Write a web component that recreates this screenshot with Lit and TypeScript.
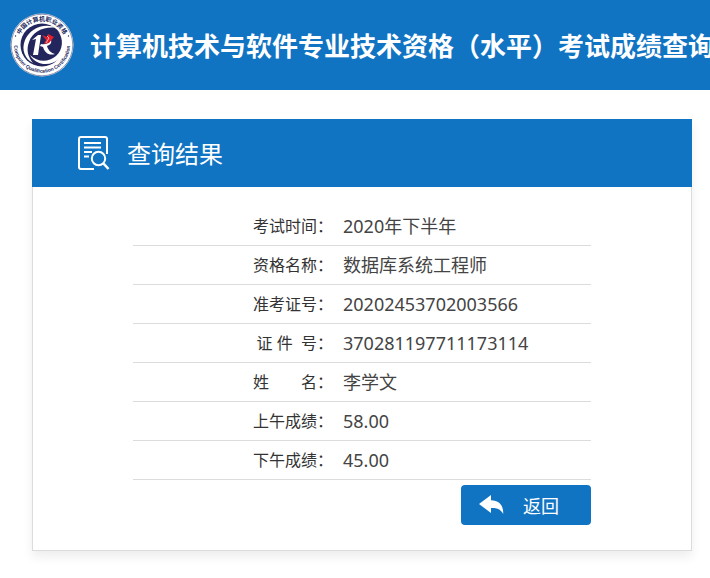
import { LitElement, html, css } from "lit";
import { customElement, property } from "lit/decorators.js";

@customElement("site-logo")
class SiteLogo extends LitElement {
  static styles = css`
    :host { display: block; flex: none; width: 64px; height: 64px; }
    svg { display: block; width: 100%; height: 100%; }
    .ring { font-family: "Liberation Sans", "Noto Sans CJK SC", sans-serif; font-weight: 700; fill: #23265c; }
    .zh { font-size: 6px; }
    .en { font-size: 5px; }
  `;
  render() {
    return html`
      <svg viewBox="0 0 64 64" role="img" aria-label="中国计算机职业资格">
        <defs>
          <path id="top" d="M8 32a24 24 0 0 1 48 0" />
          <path id="bottom" d="M4.400 27A28 28 0 1 0 59.600 27" />
        </defs>
        <circle cx="32" cy="32" r="31.500" fill="#fff" />
        <circle cx="32" cy="32" r="30.800" fill="none" stroke="#23265c" stroke-width=".5" />
        <circle cx="32" cy="32" r="21.500" fill="#23265c" />
        <path fill="#fff" d="M48 15C34 9 20 15 15 27c-4 10 0 19 8 23-5-6-7-13-4-21C23 18 34 13 48 15Z" />
        <path fill="#fff" d="M20 42c7 7 18 8 26 1 7-6 8-17 2-25 9 8 9 20 2 27-9 9-24 8-30-3Z" />
        <path fill="#fff" d="m22 27 6-5h3l-3 20h-5l3-16-4 1Z" />
        <path fill="#fff" d="M31 31c4 1 8-1 10-4 1 3-1 5-4 6 1 4 4 7 8 8-6 2-10-1-12-7l-3-1Z" />
        <path fill="#e3212d" d="m32 22 5 2 1-3 6 3-5 6-5 1 2-4-4-5Z" />
        <path fill="none" stroke="#fff" stroke-width=".6" d="m37 23 2 2-3 5" />
        <text class="ring zh" text-anchor="middle"><textPath href="#top" startOffset="50%">中国计算机职业资格</textPath></text>
        <text class="ring en" text-anchor="middle"><textPath href="#bottom" startOffset="50%">Computer Qualification Certification</textPath></text>
        <circle cx="5.500" cy="23" r=".7" fill="#23265c" />
        <circle cx="58.500" cy="23" r=".7" fill="#23265c" />
      </svg>
    `;
  }
}

interface Field { label: string; value: string; }

@customElement("app-root")
class AppRoot extends LitElement {
  static styles = css`
    :host {
      display: block;
      font-family: "Noto Sans", "Noto Sans CJK SC", sans-serif;
      color: #444;
      background: #fff;
    }
    .banner {
      display: flex;
      align-items: center;
      gap: 16px;
      height: 90px;
      box-sizing: border-box;
      padding-left: 10px;
      overflow: hidden;
      background: #1174c3;
      color: #fff;
    }
    h1 {
      margin: 0;
      font: 700 26px/40px "Noto Sans CJK SC", sans-serif;
      white-space: nowrap;
    }
    .card {
      margin: 29px 18px 27px 32px;
      box-shadow: 0 6px 10px rgba(0, 0, 0, 0.07);
    }
    .head {
      display: flex;
      align-items: center;
      gap: 17px;
      height: 68px;
      padding-left: 45px;
      background: #1174c3;
      color: #fff;
    }
    h2 { margin: 0; font: 400 24px/36px "Noto Sans CJK SC", sans-serif; }
    .body {
      padding: 20px 100px 25px;
      border: 1px solid #dcdcdc;
      border-top: 0;
      background: #fff;
    }
    table { width: 100%; border-collapse: collapse; table-layout: fixed; }
    th, td { height: 38px; padding: 0; border-bottom: 1px solid #dcdcdc; line-height: 24px; font-weight: 400; }
    th { width: 200px; text-align: right; font-size: 16px; color: #333; white-space: nowrap; }
    td { padding-left: 10px; font-size: 18px; }
    .actions { display: flex; justify-content: flex-end; padding-top: 5px; }
    button {
      display: flex;
      align-items: center;
      gap: 19px;
      width: 130px;
      height: 40px;
      padding: 0 0 0 18px;
      border: 0;
      border-radius: 4px;
      background: #1174c3;
      color: #fff;
      font: 400 18px/24px "Noto Sans CJK SC", sans-serif;
    }
    svg { display: block; flex: none; }
  `;

  @property({ attribute: false })
  fields: Field[] = [
    { label: "考试时间：", value: "2020年下半年" },
    { label: "资格名称：", value: "数据库系统工程师" },
    { label: "准考证号：", value: "20202453702003566" },
    { label: "证\u00a0件\u00a0\u00a0号：", value: "370281197711173114" },
    { label: "姓\u3000\u3000名：", value: "李学文" },
    { label: "上午成绩：", value: "58.00" },
    { label: "下午成绩：", value: "45.00" },
  ];

  render() {
    return html`
      <header class="banner">
        <site-logo></site-logo>
        <h1>计算机技术与软件专业技术资格（水平）考试成绩查询</h1>
      </header>
      <main class="card">
        <div class="head">
          <svg width="33" height="36" viewBox="0 0 33 36" fill="none" stroke="#fff" stroke-width="2" aria-hidden="true">
            <path d="M17 34H4a2 2 0 0 1-2-2V4a2 2 0 0 1 2-2h24a2 2 0 0 1 2 2v15" />
            <path d="M7 8h17M7 12.500h17M7 17h8M7 21.500h5" />
            <circle cx="21.500" cy="23.500" r="6.700" />
            <path d="m26.500 28.500 5 5.500" stroke-width="2.600" />
          </svg>
          <h2>查询结果</h2>
        </div>
        <div class="body">
          <table>
            <tbody>
              ${this.fields.map((f) => html`<tr><th scope="row">${f.label}</th><td>${f.value}</td></tr>`)}
            </tbody>
          </table>
          <div class="actions">
            <button type="button">
              <svg width="25" height="20" viewBox="0 0 25 20" fill="#fff" aria-hidden="true">
                <path d="M0 9 12 0v5.300c8 .2 12.600 5 12.200 13.700C22 14.500 18.500 12.800 12 13v5Z" />
              </svg>
              返回
            </button>
          </div>
        </div>
      </main>
    `;
  }
}
